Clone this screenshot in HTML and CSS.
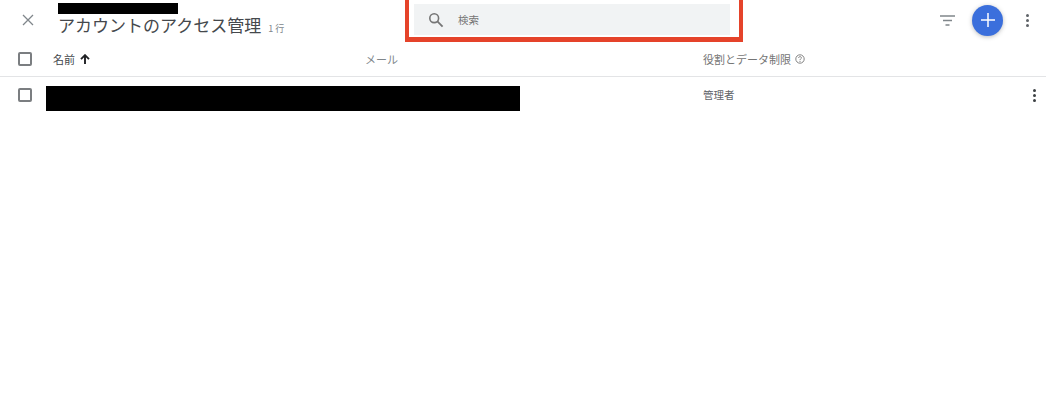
FILE: index.html
```html
<!DOCTYPE html>
<html lang="ja">
<head>
    <meta charset="UTF-8">
    <title>アカウントのアクセス管理</title>
    <link rel="stylesheet" href="styles.css">
</head>
<body>
    <div class="topbar">
        <button class="close-btn">
            <svg width="12" height="12" viewBox="0 0 12 12"><path d="M1 1L11 11M11 1L1 11" stroke="#80868b" stroke-width="1.3" fill="none"/></svg>
        </button>
        <div class="title-block">
            <div class="redacted account-name"></div>
            <div class="title-line">
                <span class="title">アカウントのアクセス管理</span>
                <span class="count">1 行</span>
            </div>
        </div>
        <div class="search-frame">
            <div class="search-box">
                <svg class="search-icon" width="16" height="16" viewBox="0 0 16 16"><circle cx="6.2" cy="6.2" r="4.4" stroke="#757575" stroke-width="1.6" fill="none"/><path d="M9.4 9.4L14.6 14.6" stroke="#757575" stroke-width="1.8" fill="none"/></svg>
                <span class="search-text">検索</span>
            </div>
        </div>
        <div class="actions">
            <svg class="filter-icon" width="15" height="11" viewBox="0 0 15 11"><path d="M0 1H15M3 5.5H12M5.5 10H9.5" stroke="#80868b" stroke-width="1.5" fill="none"/></svg>
            <button class="add-btn">
                <svg width="14" height="14" viewBox="0 0 14 14"><path d="M7 0V14M0 7H14" stroke="#fff" stroke-width="1.5" fill="none"/></svg>
            </button>
            <div class="dots dots-grey"><i></i><i></i><i></i></div>
        </div>
    </div>

    <div class="row head-row">
        <div class="checkbox"></div>
        <div class="col-name">名前
            <svg width="10" height="10" viewBox="0 0 10 10"><path d="M5 10V1.5M1 5.2L5 1.2L9 5.2" stroke="#202124" stroke-width="1.9" fill="none"/></svg>
        </div>
        <div class="col-mail">メール</div>
        <div class="col-role">役割とデータ制限
            <svg width="10" height="10" viewBox="0 0 10 10"><circle cx="5" cy="5" r="4.2" stroke="#757575" stroke-width="0.9" fill="none"/><path d="M3.6 4C3.6 2.2 6.4 2.2 6.4 3.9C6.4 4.9 5 4.9 5 6.2" stroke="#757575" stroke-width="0.9" fill="none"/><circle cx="5" cy="7.5" r="0.55" fill="#757575"/></svg>
        </div>
    </div>

    <div class="row body-row">
        <div class="checkbox"></div>
        <div class="redacted user-cell"></div>
        <div class="col-admin">管理者</div>
        <div class="dots dots-dark"><i></i><i></i><i></i></div>
    </div>
</body>
</html>
```

FILE: styles.css
```css
body {
    margin: 0;
    background: #fff;
    color: #5f6368;
    font-family: "Noto Sans CJK JP", Roboto, sans-serif;
    overflow: hidden;
}
button {
    border: none;
    padding: 0;
    background: none;
    display: flex;
    align-items: center;
    justify-content: center;
}
.redacted {
    background: #000;
}

/* top bar */
.topbar {
    height: 42px;
    display: flex;
}
.close-btn {
    width: 12px;
    height: 12px;
    margin: 14px 24px 0 22px;
}
.title-block {
    width: 347px;
    padding-top: 3px;
}
.account-name {
    width: 120px;
    height: 11px;
}
.title-line {
    display: flex;
    align-items: baseline;
    height: 24px;
    line-height: 21px;
}
.title {
    font-size: 17px;
    color: #45484c;
}
.count {
    font-size: 9px;
    margin-left: 7px;
    color: #80868b;
}
.search-frame {
    width: 338px;
    height: 42px;
    box-sizing: border-box;
    border: 4px solid #e5432a;
    border-top-width: 0;
    border-bottom-width: 5px;
    padding: 4px 9px 0 5px;
}
.search-box {
    height: 31px;
    background: #f1f3f4;
    display: flex;
    align-items: center;
    padding-left: 14px;
}
.search-text {
    font-size: 10.5px;
    margin-left: 14px;
    margin-top: -1px;
    color: #757575;
}
.actions {
    flex: 1;
    display: flex;
    align-items: center;
    height: 40px;
    padding-left: 197px;
}
.add-btn {
    width: 31px;
    height: 31px;
    margin-left: 17px;
    border-radius: 50%;
    background: #3b6fdc;
    box-shadow: 0 1px 4px rgba(60, 64, 67, 0.35);
}
.dots {
    display: flex;
    flex-direction: column;
    gap: 2px;
}
.dots i {
    display: block;
    width: 3px;
    height: 3px;
    border-radius: 50%;
}
.dots-grey {
    margin-left: 23px;
}
.dots-grey i {
    background: #5f6368;
}
.dots-dark {
    margin-left: auto;
    margin-right: 10px;
}
.dots-dark i {
    background: #3c4043;
}

/* table */
.row {
    display: flex;
    align-items: center;
}
.head-row {
    height: 34px;
    border-bottom: 1px solid #e3e4e6;
    font-size: 11px;
}
.checkbox {
    width: 10px;
    height: 10px;
    margin-left: 18px;
    border: 2px solid #7b7e81;
    border-radius: 2px;
    flex-shrink: 0;
}
.col-name {
    width: 312px;
    margin-left: 21px;
    color: #45484c;
    display: flex;
    align-items: center;
    gap: 5px;
}
.col-mail {
    width: 338px;
    color: #80868b;
}
.col-role {
    display: flex;
    align-items: center;
    gap: 4px;
    color: #757575;
}
.body-row {
    height: 36px;
    font-size: 10.5px;
}
.user-cell {
    width: 474px;
    height: 25px;
    margin: 9px 0 0 14px;
    align-self: flex-start;
}
.col-admin {
    margin-left: 183px;
    margin-top: -2px;
    color: #5f6368;
}
```
